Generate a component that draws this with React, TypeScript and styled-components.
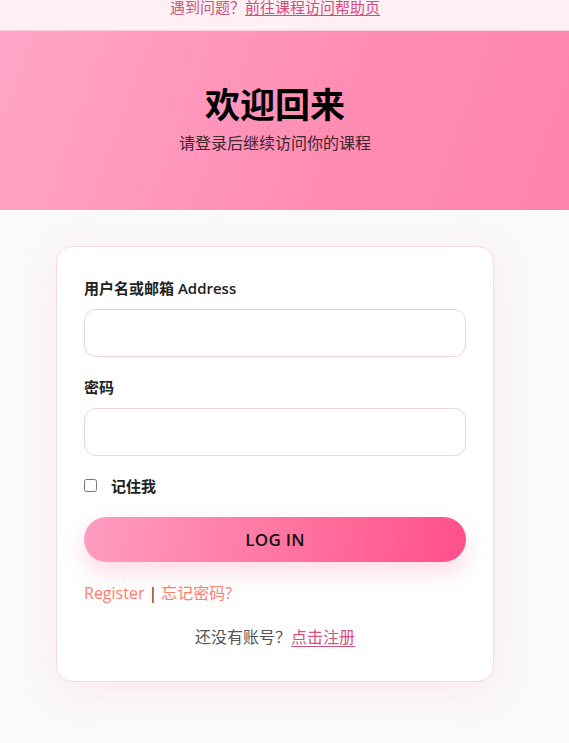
import { useState } from 'react';
import styled, { createGlobalStyle } from 'styled-components';

const GlobalStyle = createGlobalStyle`
    body {
        margin: 0;
        background: #fafafa;
        font-family: 'Open Sans', 'Noto Sans CJK SC', sans-serif;
        color: #222;
    }
    * {
        box-sizing: border-box;
    }
`;

const TopBar = styled.div`
    height: 31px;
    background: #fff0f5;
    border-bottom: 1px solid #f7d3e0;
    overflow: hidden;
`;

const TopInner = styled.div`
    width: 550px;
    text-align: center;
    font-size: 15px;
    line-height: 20px;
    margin-top: -3px;
    color: #c8557c;
`;

const HelpLink = styled.a`
    color: #d34d78;
    text-decoration: underline;
    text-underline-offset: 2px;
`;

const Hero = styled.header`
    height: 179px;
    background: linear-gradient(110deg, #ffa6c7 0%, #ff8cb3 60%, #ff84ad 100%);
    display: flex;
    flex-direction: column;
    align-items: center;
    justify-content: center;
    padding: 0 19px 4px 0;
`;

const Title = styled.h1`
    margin: 0 0 5px;
    font-size: 35px;
    line-height: 44px;
    font-weight: 700;
    color: #000;
`;

const Subtitle = styled.p`
    margin: 0;
    font-size: 16px;
    line-height: 22px;
    color: #3a2730;
`;

const Main = styled.main`
    width: 550px;
    display: flex;
    justify-content: center;
    padding: 36px 0 60px;
`;

const Card = styled.div`
    width: 438px;
    background: #fff;
    border: 1px solid #f6d9e4;
    border-radius: 16px;
    padding: 30px 27px 32px;
    box-shadow: 0 8px 40px rgba(255, 150, 185, 0.18);
`;

const Field = styled.div`
    display: flex;
    flex-direction: column;
    gap: 10px;
    margin-bottom: 19px;
`;

const Label = styled.label`
    font-size: 15px;
    line-height: 22px;
    font-weight: 600;
    color: #222;
`;

const TextInput = styled.input`
    height: 48px;
    width: 100%;
    border: 1px solid #ecd2dd;
    border-radius: 12px;
    padding: 0 14px;
    font-size: 15px;
    outline: none;
    background: #fff;

    &:focus {
        border-color: #ff7aa6;
    }
`;

const RememberRow = styled.label`
    display: flex;
    align-items: center;
    gap: 14px;
    margin-top: 7px;
    font-size: 15px;
    font-weight: 600;
    color: #222;
`;

const Check = styled.input`
    width: 13px;
    height: 13px;
    margin: 0;
`;

const SubmitButton = styled.button`
    margin-top: 21px;
    width: 100%;
    height: 45px;
    border: none;
    border-radius: 999px;
    background: linear-gradient(100deg, #ff9dc0 0%, #ff6f9d 60%, #ff4f8b 100%);
    color: #111;
    font-family: inherit;
    font-size: 17px;
    font-weight: 600;
    letter-spacing: 0.3px;
    box-shadow: 0 10px 22px rgba(255, 110, 160, 0.25);
    cursor: pointer;

    &:hover {
        opacity: 0.92;
    }
`;

const LinkRow = styled.div`
    margin-top: 19px;
    font-size: 16px;
    line-height: 24px;
    color: #222;
`;

const SoftLink = styled.a`
    color: #ff7b6f;
    text-decoration: none;
`;

const Divider = styled.span`
    margin: 0 4px;
    color: #222;
`;

const SignUpRow = styled.div`
    margin-top: 20px;
    text-align: center;
    font-size: 16px;
    line-height: 24px;
    color: #555;
`;

const SignUpLink = styled.a`
    color: #d9507c;
    text-decoration: underline;
    text-underline-offset: 3px;
`;

const App = () => {
    const [remember, setRemember] = useState(false);

    return (
        <>
            <GlobalStyle />
            <TopBar>
                <TopInner>
                    遇到问题？<HelpLink href="#">前往课程访问帮助页</HelpLink>
                </TopInner>
            </TopBar>
            <Hero>
                <Title>欢迎回来</Title>
                <Subtitle>请登录后继续访问你的课程</Subtitle>
            </Hero>
            <Main>
                <Card>
                    <Field>
                        <Label htmlFor="user">用户名或邮箱 Address</Label>
                        <TextInput id="user" type="text" />
                    </Field>
                    <Field>
                        <Label htmlFor="pass">密码</Label>
                        <TextInput id="pass" type="password" />
                    </Field>
                    <RememberRow>
                        <Check type="checkbox" checked={remember} onChange={(e) => setRemember(e.target.checked)} />
                        记住我
                    </RememberRow>
                    <SubmitButton type="submit">LOG IN</SubmitButton>
                    <LinkRow>
                        <SoftLink href="#">Register</SoftLink>
                        <Divider>|</Divider>
                        <SoftLink href="#">忘记密码?</SoftLink>
                    </LinkRow>
                    <SignUpRow>
                        还没有账号？<SignUpLink href="#">点击注册</SignUpLink>
                    </SignUpRow>
                </Card>
            </Main>
        </>
    );
};

export default App;
